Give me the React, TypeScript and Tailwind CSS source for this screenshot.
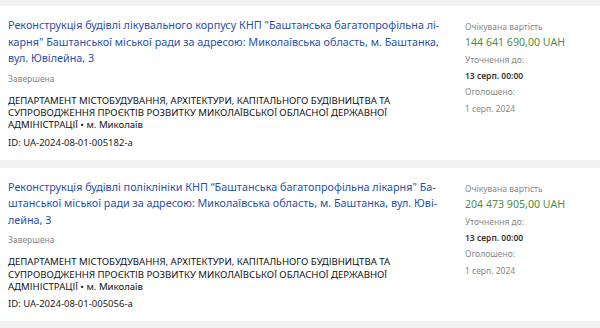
const tenders = [
  {
    title: [
      'Реконструкція будівлі лікувального корпусу КНП "Баштанська багатопрофільна лі-',
      'карня" Баштанської міської ради за адресою: Миколаївська область, м. Баштанка,',
      'вул. Ювілейна, 3',
    ],
    id: 'UA-2024-08-01-005182-a',
    amount: '144 641 690,00 UAH',
  },
  {
    title: [
      'Реконструкція будівлі поліклініки КНП “Баштанська багатопрофільна лікарня" Ба-',
      'штанської міської ради за адресою: Миколаївська область, м. Баштанка, вул. Юві-',
      'лейна, 3',
    ],
    id: 'UA-2024-08-01-005056-a',
    amount: '204 473 905,00 UAH',
  },
]

export default function App() {
  return (
    <main
      className="min-h-screen bg-[#f2f2f2] pt-[6px] flex flex-col gap-[8px]"
      style={{ fontFamily: '"Noto Sans", "Open Sans", sans-serif' }}
    >
      {tenders.map((t) => (
        <div key={t.id} className="bg-white flex px-[8px] pt-[11px] pb-[11px]">
          {/* Left column */}
          <div className="w-[457px] shrink-0">
            <a className="block text-[10.8px] leading-[16.6px] text-[#2a50a6] whitespace-nowrap">
              {t.title.map((line, i) => (
                <span key={i} className="block">
                  {line}
                </span>
              ))}
            </a>
            <div className="mt-[5px] text-[8.5px] leading-[13px] text-[#888]">Завершена</div>
            <div className="mt-[10px] text-[9.6px] leading-[12.3px] text-[#111] whitespace-nowrap">
              ДЕПАРТАМЕНТ МІСТОБУДУВАННЯ, АРХІТЕКТУРИ, КАПІТАЛЬНОГО БУДІВНИЦТВА ТА
              <br />
              СУПРОВОДЖЕННЯ ПРОЄКТІВ РОЗВИТКУ МИКОЛАЇВСЬКОЇ ОБЛАСНОЇ ДЕРЖАВНОЇ
              <br />
              АДМІНІСТРАЦІЇ • м. Миколаїв
            </div>
            <div className="mt-[4px] text-[9.5px] leading-[13px] text-[#222]">ID: {t.id}</div>
          </div>

          {/* Right column */}
          <div className="flex flex-col pt-[3px]">
            <div className="text-[8.5px] leading-[13px] text-[#888]">Очікувана вартість</div>
            <div className="text-[10.6px] leading-[18px] text-[#4f8f3f]">{t.amount}</div>
            <div className="mt-[1px] text-[8.5px] leading-[16px] text-[#888]">Уточнення до:</div>
            <div className="text-[8.5px] leading-[16px] font-semibold text-[#333]">13 серп. 00:00</div>
            <div className="text-[8.5px] leading-[16px] text-[#888]">Оголошено:</div>
            <div className="text-[8.5px] leading-[17px] text-[#888]">1 серп. 2024</div>
          </div>
        </div>
      ))}
    </main>
  )
}
